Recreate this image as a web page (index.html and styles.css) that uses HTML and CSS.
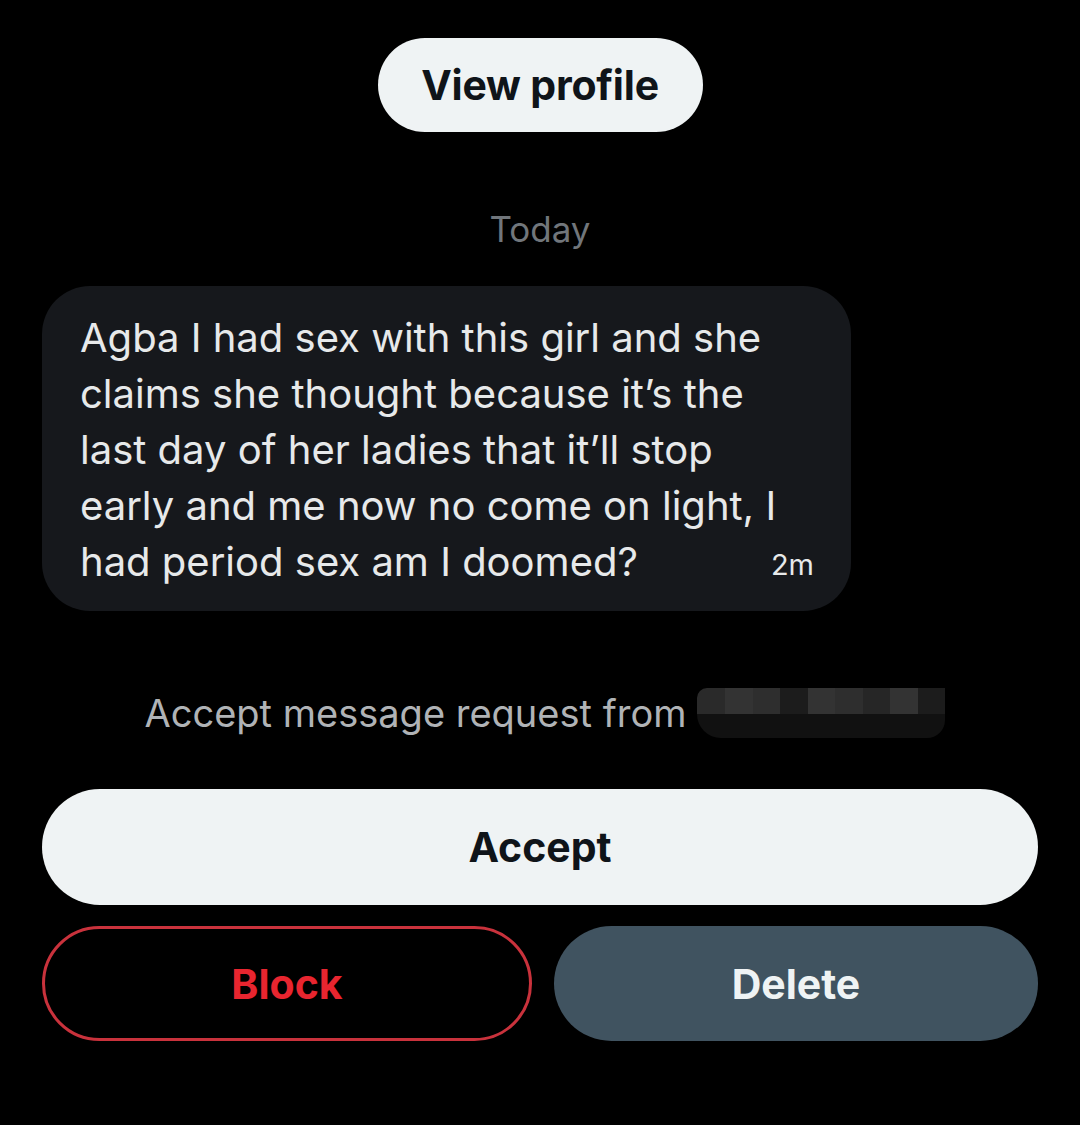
FILE: index.html
```html
<!DOCTYPE html>
<html lang="en">
<head>
<meta charset="utf-8">
<title>Message request</title>
<link rel="stylesheet" href="styles.css">
</head>
<body>
<main class="page">
  <button class="btn btn-profile">View profile</button>
  <div class="date">Today</div>
  <div class="bubble">
    <p class="bubble-text">Agba I had sex with this girl and she<br>claims she thought because it’s the<br>last day of her ladies that it’ll stop<br>early and me now no come on light, I<br>had period sex am I doomed?</p>
    <span class="time">2m</span>
  </div>
  <div class="request">
    <span class="request-text">Accept message request from</span>
    <span class="redact">
      <span class="r-top"><i class="c1"></i><i class="c2"></i><i class="c3"></i><i class="c4"></i><i class="c2"></i><i class="c3"></i><i class="c5"></i><i class="c2"></i><i class="c4"></i></span>
      <span class="r-bot"></span>
    </span>
  </div>
  <button class="btn btn-accept">Accept</button>
  <div class="row">
    <button class="btn btn-block">Block</button>
    <button class="btn btn-delete">Delete</button>
  </div>
</main>
</body>
</html>
```

FILE: styles.css
```css
html, body {
  margin: 0;
  padding: 0;
  background: #000;
}
body {
  font-family: Inter, "Noto Sans", "Liberation Sans", sans-serif;
  color: #e7e9ea;
  width: 1080px;
  height: 1125px;
  overflow: hidden;
}
.page {
  display: flex;
  flex-direction: column;
  padding: 38px 42px 0;
}
.btn {
  font-family: inherit;
  border: none;
  font-weight: 700;
  cursor: pointer;
  display: flex;
  align-items: center;
  justify-content: center;
  padding: 0;
  box-sizing: border-box;
}
.btn-profile {
  align-self: center;
  height: 94px;
  width: 325px;
  border-radius: 47px;
  background: #eff3f4;
  color: #0f1419;
  font-size: 41px;
  letter-spacing: -0.2px;
}
.date {
  margin-top: 77px;
  text-align: center;
  font-size: 35px;
  line-height: 40px;
  color: #71767b;
}
.bubble {
  position: relative;
  margin-top: 37px;
  width: 809px;
  box-sizing: border-box;
  padding: 24px 38px 21px;
  background: #16181c;
  border-radius: 48px;
}
.bubble-text {
  margin: 0;
  font-size: 40px;
  line-height: 56px;
  color: #e7e9ea;
  white-space: nowrap;
}
.time {
  position: absolute;
  right: 37px;
  bottom: 29px;
  font-size: 29px;
  line-height: 34px;
  color: #e7e9ea;
}
.request {
  margin-top: 77px;
  display: flex;
  align-items: center;
  justify-content: center;
  gap: 11px;
  padding-left: 10px;
}
.request-text {
  font-size: 38px;
  line-height: 44px;
  color: #b0b3b6;
}
.redact {
  display: flex;
  flex-direction: column;
  width: 248px;
  height: 50px;
  border-radius: 10px 0 12px 12px;
  overflow: hidden;
}
.r-top {
  display: flex;
  height: 26px;
}
.r-top i {
  flex: 1;
}
.c1 { background: #2a2a2a; }
.c2 { background: #333333; }
.c3 { background: #2e2e2e; }
.c4 { background: #1c1c1c; }
.c5 { background: #262626; }
.r-bot {
  height: 24px;
  background: #111111;
  border-radius: 0 0 30px 40px;
}
.btn-accept {
  margin-top: 51px;
  height: 116px;
  border-radius: 58px;
  background: #eff3f4;
  color: #0f1419;
  font-size: 41px;
}
.row {
  margin-top: 21px;
  display: flex;
  gap: 22px;
}
.row .btn {
  flex: 1 1 0;
  min-width: 0;
  height: 115px;
  border-radius: 58px;
  font-size: 41px;
}
.btn-block {
  background: #000;
  border: 3px solid #c9323c;
  color: #e8252f;
}
.btn-delete {
  background: #405360;
  color: #eff3f4;
}
```
